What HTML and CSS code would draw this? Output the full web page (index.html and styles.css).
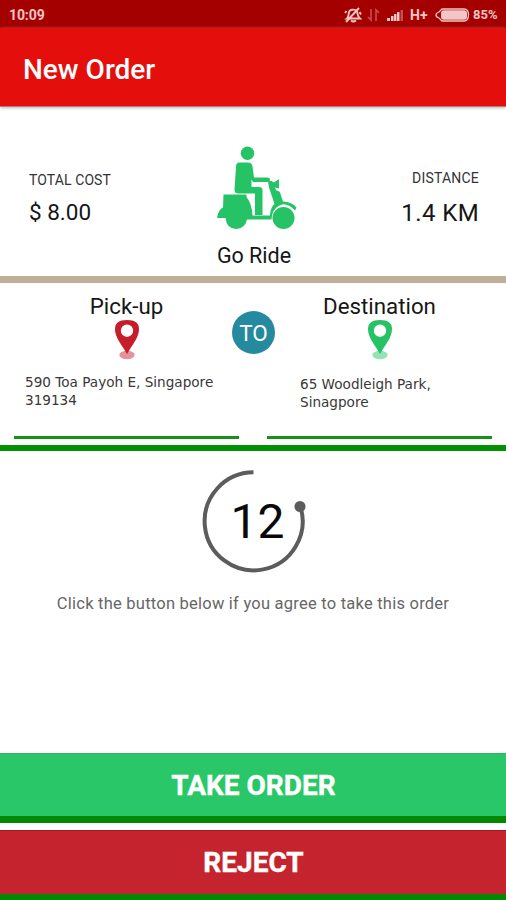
FILE: index.html
```html
<!DOCTYPE html>
<html lang="en">
<head>
<meta charset="utf-8">
<meta name="viewport" content="width=device-width, initial-scale=1">
<title>New Order</title>
<link rel="stylesheet" href="styles.css">
</head>
<body>
<div class="screen">
  <div class="status">
    <span class="clock">10:09</span>
    <svg class="status-mute" width="18" height="18" viewBox="0 0 18 18" fill="none" stroke="currentColor" stroke-width="1.9"><path d="M3 12.500C5 11 4.500 8 5 6C5.500 3.500 11 2.500 13 5.500C14 8 13 10 16 12.500Z"/><path d="M7 14.500Q9.500 16.500 12 14.500M2 16L15 2M1 7L2.500 5M15.500 6L17 8.500"/></svg>
    <svg class="status-data" width="13" height="14" viewBox="0 0 13 14" fill="none" stroke="currentColor" stroke-width="1.600"><path d="M4 1V12L1 9M9 13V2L12 5"/></svg>
    <svg class="status-signal" width="17" height="12" viewBox="0 0 17 12" fill="currentColor"><path d="M0 9h3v3H0zM4 7h2.500v5H4zM7 5h2.500v7H7zM10 3h2.500v9h-2.500z"/><path opacity=".4" d="M13.500 1h2.500v11h-2.500z"/></svg>
    <span class="network">H+</span>
    <svg class="status-battery" width="35" height="14" viewBox="0 0 35 14"><path d="M7 1H29Q33.500 1 33.500 7T29 13H7L4 10Q1 9 1 7T4 4Z" fill="none" stroke="currentColor" stroke-width="1.300"/><rect x="6" y="2.300" width="26" height="9.400" rx="3" fill="currentColor"/></svg>
    <span class="percent">85%</span>
  </div>
  <header class="appbar"><h1>New Order</h1></header>
  <section class="summary">
    <div class="metric">
      <div class="label label-cost">TOTAL COST</div>
      <div class="value value-cost">$ 8.00</div>
    </div>
    <div class="ride">
      <svg class="scooter" width="80" height="84" viewBox="0 0 80 84" fill="#25c366">
        <circle cx="30.500" cy="7.200" r="6.700"/>
        <path d="M22.500 16.500H31Q35 16.500 35.500 20.500L37 31.500H50.500Q53 31.500 53 33.500T50.500 36H36L34.500 33.500V41H42Q45.500 41 45.500 44V69H38V47.500H21Q17.500 47.500 17.500 43.500L19 20.500Q19 16.500 22.500 16.500Z"/>
        <path d="M6.500 48.500H29.500V51Q35 58 35.500 69.500H53Q53.500 61 57.500 58L52 41.500L51 35H54.500L57 36.500L62 33V42.500L58 41.500L59.500 44.500Q62.500 45 63 46.500L66 55.500Q75 56 79.500 61.500L78 64.500Q66 52 56.500 65Q54.500 69 54.500 73.500H30Q28.500 82.500 19 83Q9.500 82.500 8.500 72H0Q1 64 6 61.500Z"/>
        <circle cx="66.500" cy="72" r="11"/>
      </svg>
      <div class="ride-name">Go Ride</div>
    </div>
    <div class="metric metric-right">
      <div class="label label-distance">DISTANCE</div>
      <div class="value value-distance">1.4 KM</div>
    </div>
  </section>
  <section class="route">
    <div class="stop">
      <h2 class="pickup-title">Pick-up</h2>
      <svg class="pin pin-red" width="26" height="40" viewBox="0 0 26 40"><ellipse cx="13" cy="35" rx="7.700" ry="4.200" fill="currentColor" opacity=".48"/><path fill="currentColor" fill-rule="evenodd" d="M13 0Q1 0 1 9C1 17 7 24 10 29L13 34L16 29C19 24 25 17 25 9Q25 0 13 0ZM13 4.500A6.200 6.200 0 1 1 13 16.900A6.200 6.200 0 1 1 13 4.500Z"/></svg>
      <p class="address address-pickup">590 Toa Payoh E, Singapore<br>319134</p>
    </div>
    <div class="stop">
      <h2 class="destination-title">Destination</h2>
      <svg class="pin pin-green" width="26" height="40" viewBox="0 0 26 40"><ellipse cx="13" cy="35" rx="7.700" ry="4.200" fill="currentColor" opacity=".48"/><path fill="currentColor" fill-rule="evenodd" d="M13 0Q1 0 1 9C1 17 7 24 10 29L13 34L16 29C19 24 25 17 25 9Q25 0 13 0ZM13 4.500A6.200 6.200 0 1 1 13 16.900A6.200 6.200 0 1 1 13 4.500Z"/></svg>
      <p class="address address-destination">65 Woodleigh Park,<br>Sinagpore</p>
    </div>
    <div class="to">TO</div>
  </section>
  <main class="countdown">
    <div class="timer">
      <svg width="110" height="110" viewBox="0 0 110 110"><path d="M55.500 6.300A49 49 0 1 0 102.500 41" fill="none" stroke="#5c5c5c" stroke-width="4"/><circle cx="102" cy="40.500" r="5.500" fill="#5c5c5c"/></svg>
      <span class="seconds">12</span>
    </div>
    <p class="hint">Click the button below if you agree to take this order</p>
  </main>
  <button class="action take">TAKE ORDER</button>
  <button class="action reject">REJECT</button>
</div>
</body>
</html>
```
FILE: styles.css
```css
* { box-sizing: border-box; }
body { margin: 0; background: #fff; color: #161616; font-family: Roboto, "Liberation Sans", sans-serif; }
h1, h2, p { margin: 0; font-weight: 400; }
svg { display: block; flex: none; }
.screen { width: 506px; height: 900px; display: flex; flex-direction: column; overflow: hidden; }
.status { height: 28px; flex: none; background: #a50000; color: #f3c5c5; display: flex; align-items: center; padding: 1px 8px 0 9px; font-size: 14px; font-weight: 700; line-height: 28px; white-space: nowrap; }
.clock { width: 335px; letter-spacing: -.1px; }
.status-data { margin-left: 5px; opacity: .4; }
.status-signal { margin-left: 7px; }
.network { width: 24px; margin-left: 6px; }
.status-battery { margin-left: 1px; }
.percent { margin-left: 3px; font-size: 13px; }
.appbar { height: 79px; flex: none; background: #e40f0d; border-bottom: 1px solid #b87977; padding: 21px 23px; box-shadow: 0 1px 3px #bbb; z-index: 1; }
.appbar h1 { color: #fff; font-size: 28px; line-height: 42px; font-weight: 500; }
.summary { height: 176px; flex: none; display: grid; grid-template-columns: 1fr 100px 1fr; border-bottom: 7px solid #bfae99; padding: 0 27px 0 29px; }
.metric { padding-top: 64px; white-space: nowrap; }
.metric-right { text-align: right; padding-top: 62px; }
.label { font-size: 14px; line-height: 18px; color: #333; }
.label-cost { letter-spacing: .1px; }
.label-distance { letter-spacing: .2px; }
.value { font-size: 22.500px; line-height: 30px; margin-top: 8px; }
.value-distance { font-size: 24px; letter-spacing: .4px; margin-top: 11px; }
.ride { display: flex; flex-direction: column; align-items: center; padding-top: 39px; }
.scooter { margin-left: 6px; }
.ride-name { font-size: 21.500px; line-height: 28px; margin-top: 12px; }
.route { position: relative; height: 168px; flex: none; display: grid; grid-template-columns: 1fr 1fr; border-bottom: 6px solid #039203; }
.stop { margin: 0 14px 6px 14px; border-bottom: 3px solid #199019; display: flex; flex-direction: column; align-items: center; padding-top: 9px; }
.stop h2 { font-size: 22.300px; line-height: 28px; }
.pin-red { color: #c51d29; }
.pin-green { color: #25c366; }
.address { align-self: stretch; font-family: "DejaVu Sans", sans-serif; font-size: 13.600px; line-height: 18px; color: #383838; white-space: nowrap; }
.address-pickup { padding: 13px 0 0 11px; }
.address-destination { padding: 15px 0 0 33px; }
.to { position: absolute; left: 232px; top: 28px; width: 43px; height: 43px; border-radius: 50%; background: #258a9f; color: #fff; font-size: 22.500px; line-height: 44px; text-align: center; }
.countdown { flex: 1; display: flex; flex-direction: column; align-items: center; padding-top: 15px; }
.timer { display: grid; place-items: center; }
.timer svg, .seconds { grid-area: 1 / 1; }
.seconds { font-size: 48px; line-height: 54px; padding: 2px 0 0 9px; color: #090909; }
.hint { font-size: 16.500px; letter-spacing: .23px; line-height: 22px; margin-top: 17px; color: #666; }
.action { flex: none; width: 100%; border: 0; border-bottom: 7px solid #028802; padding: 0 0 0 1px; color: #fff; font-family: inherit; font-size: 28px; font-weight: 700; line-height: 63px; text-align: center; -webkit-text-stroke: .4px #fff; }
.take { height: 70px; background: #29c768; border-top: 1px solid #3dae6e; }
.reject { height: 70px; margin-top: 7px; background: #c5232d; border-top: 1px solid #ac1821; border-bottom-width: 6px; }
```
